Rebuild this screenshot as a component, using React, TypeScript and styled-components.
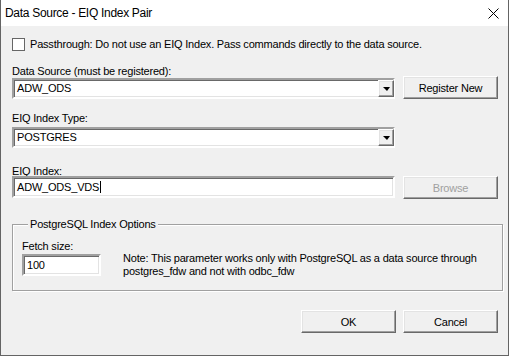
import React from 'react';
import styled, {createGlobalStyle} from 'styled-components';

const GlobalStyle = createGlobalStyle`
  html, body {
    margin: 0;
    padding: 0;
    background: #f0f0f0;
  }

  * {
    box-sizing: border-box;
  }
`;

const UI_FONT = `"Liberation Sans", Arial, sans-serif`;

const Window = styled.div`
  display: flex;
  flex-direction: column;

  width: 509px;
  height: 356px;

  border: 1px solid #646464;
  border-top: none;

  font-family: ${UI_FONT};
  font-size: 11px;
  line-height: 13px;
  letter-spacing: -0.2px;
  color: #000;
`;

const TitleBar = styled.div`
  display: flex;
  align-items: center;
  justify-content: space-between;

  height: 26px;
  padding-left: 4px;
  padding-right: 9px;

  background: #fff;
`;

const Title = styled.span`
  font-size: 12px;
  letter-spacing: -0.3px;
`;

const Body = styled.div`
  display: flex;
  flex-direction: column;
  flex: 1;

  padding: 12px 10px 0 11px;

  background: #f0f0f0;
`;

const CheckRow = styled.label`
  display: flex;
  align-items: center;
  gap: 5px;
  height: 13px;
`;

const CheckBox = styled.span`
  width: 13px;
  height: 13px;

  border: 1px solid #666;
  background: #fff;
`;

const FieldLabel = styled.div<{$top: number}>`
  margin-top: ${({$top}) => $top}px;
  height: 13px;
`;

const FieldRow = styled.div<{$align?: string}>`
  display: flex;
  align-items: ${({$align}) => $align || `flex-end`};
  gap: 8px;
`;

const FieldColumn = styled.div`
  display: flex;
  flex-direction: column;
  width: 383px;
`;

const Sunken = styled.div<{$top?: number; $height?: number; $width?: number}>`
  display: flex;
  align-items: center;

  width: ${({$width}) => ($width ? `${$width}px` : `100%`)};
  height: ${({$height}) => $height || 21}px;
  margin-top: ${({$top}) => $top || 0}px;
  padding-left: 2px;

  background: #fff;
  border-style: solid;
  border-width: 2px;
  border-color: #a0a0a0 #fff #fff #a0a0a0;
  box-shadow: inset 1px 1px 0 #696969, inset -1px -1px 0 #e3e3e3;
`;

const FieldText = styled.span`
  flex: 1;
  padding-left: 1px;
`;

const Caret = styled.span`
  display: inline-block;
  width: 1px;
  height: 12px;
  margin-left: 1px;
  vertical-align: -2px;
  background: #000;
`;

const DropButton = styled.span`
  display: flex;
  align-items: center;
  justify-content: center;

  width: 16px;
  height: 100%;
  margin-right: -1px;

  background: #f0f0f0;
  border-style: solid;
  border-width: 1px;
  border-color: #fff #696969 #696969 #fff;
  box-shadow: inset -1px -1px 0 #a0a0a0, inset 1px 1px 0 #e3e3e3;
`;

const Arrow = styled.span`
  width: 0;
  height: 0;
  margin-top: 1px;

  border-left: 4px solid transparent;
  border-right: 3px solid transparent;
  border-top: 4px solid #000;
`;

const Button = styled.button<{$disabled?: boolean}>`
  width: 95px;
  height: 23px;
  padding: 0;

  font-family: ${UI_FONT};
  font-size: 11px;
  letter-spacing: -0.2px;
  color: ${({$disabled}) => ($disabled ? `#a0a0a0` : `#000`)};

  background: #f0f0f0;
  border-style: solid;
  border-width: 1px;
  border-color: #fff #696969 #696969 #fff;
  box-shadow: inset -1px -1px 0 #a0a0a0, inset 1px 1px 0 #e3e3e3;
`;

const GroupBox = styled.fieldset`
  display: flex;
  align-items: flex-start;
  gap: 22px;

  margin: 19px 0 0;
  padding: 9px 9px 12px;

  border: 1px solid #a0a0a0;
  box-shadow: inset 1px 1px 0 #fff, 1px 1px 0 #fff;
`;

const Legend = styled.legend`
  margin-left: 6px;
  padding: 0 2px;
  background: #f0f0f0;
  line-height: 13px;
`;

const FetchColumn = styled.div`
  display: flex;
  flex-direction: column;
`;

const Note = styled.p`
  margin: 12px 0 0;
  width: 370px;
`;

const Footer = styled.div`
  display: flex;
  justify-content: flex-end;
  gap: 7px;

  margin-top: 19px;
`;

const CloseIcon = () => (
  <svg width="11" height="11" viewBox="0 0 11 11">
    <path d="M0.5 0.5 L10.5 10.5 M10.5 0.5 L0.5 10.5" stroke="#000" strokeWidth="1" fill="none"/>
  </svg>
);

const Combo = ({value, top}: {value: string; top?: number}) => (
  <Sunken $top={top}>
    <FieldText>{value}</FieldText>
    <DropButton><Arrow/></DropButton>
  </Sunken>
);

const App = () => {
  return (
    <>
      <GlobalStyle/>
      <Window>
        <TitleBar>
          <Title>Data Source - EIQ Index Pair</Title>
          <CloseIcon/>
        </TitleBar>
        <Body>
          <CheckRow>
            <CheckBox/>
            <span>Passthrough: Do not use an EIQ Index. Pass commands directly to the data source.</span>
          </CheckRow>

          <FieldRow>
            <FieldColumn>
              <FieldLabel $top={14}>Data Source (must be registered):</FieldLabel>
              <Combo value="ADW_ODS"/>
            </FieldColumn>
            <Button>Register New</Button>
          </FieldRow>

          <FieldColumn>
            <FieldLabel $top={13}>EIQ Index Type:</FieldLabel>
            <Combo value="POSTGRES" top={2}/>
          </FieldColumn>

          <FieldLabel $top={17}>EIQ Index:</FieldLabel>
          <FieldRow $align="flex-start">
            <Sunken $width={383} $height={22} $top={-2}>
              <FieldText>ADW_ODS_VDS<Caret/></FieldText>
            </Sunken>
            <Button $disabled style={{marginTop: -2}}>Browse</Button>
          </FieldRow>

          <GroupBox>
            <Legend>PostgreSQL Index Options</Legend>
            <FetchColumn>
              <span>Fetch size:</span>
              <Sunken $width={79} $height={22} $top={1}>
                <FieldText>100</FieldText>
              </Sunken>
            </FetchColumn>
            <Note>
              Note: This parameter works only with PostgreSQL as a data source through postgres_fdw and not with odbc_fdw
            </Note>
          </GroupBox>

          <Footer>
            <Button>OK</Button>
            <Button>Cancel</Button>
          </Footer>
        </Body>
      </Window>
    </>
  );
};

export default App;
